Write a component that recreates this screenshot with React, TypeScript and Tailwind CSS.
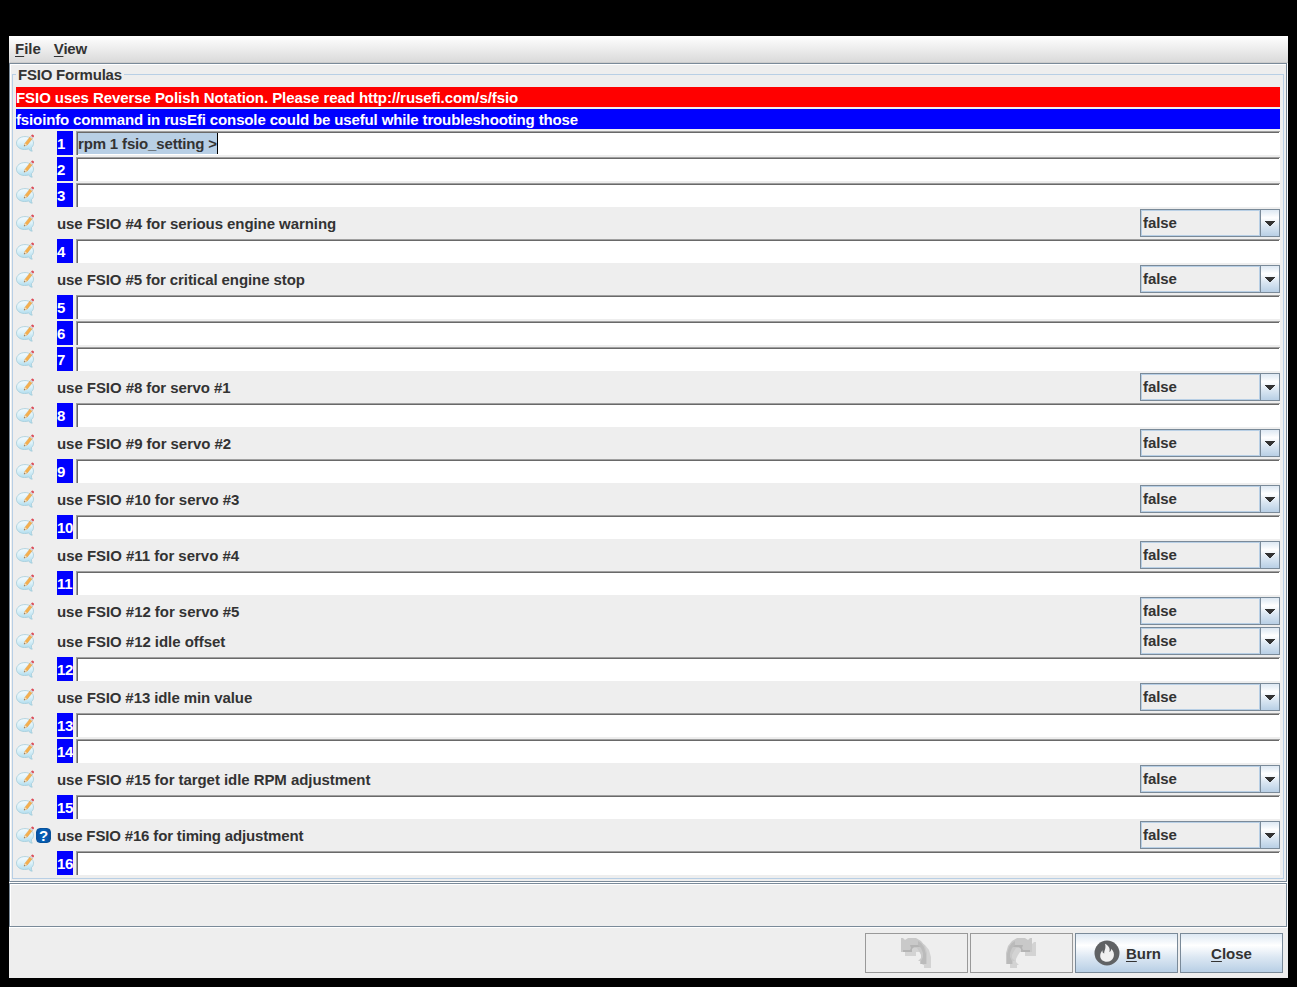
import React from "react";

type Row = { kind: "field"; n: number; value?: string } | { kind: "combo"; label: string; track: string; help?: boolean };

const f = (n: number, value?: string): Row => ({ kind: "field", n, value });
const c = (label: string, track: string, help?: boolean): Row => ({ kind: "combo", label, track, help });

const rows: Row[] = [
  f(1, "rpm 1 fsio_setting >"),
  f(2),
  f(3),
  c("use FSIO #4 for serious engine warning", "tracking-[-0.07px]"),
  f(4),
  c("use FSIO #5 for critical engine stop", "tracking-[-0.085px]"),
  f(5),
  f(6),
  f(7),
  c("use FSIO #8 for servo #1", "tracking-[-0.06px]"),
  f(8),
  c("use FSIO #9 for servo #2", "tracking-[-0.04px]"),
  f(9),
  c("use FSIO #10 for servo #3", "tracking-[-0.04px]"),
  f(10),
  c("use FSIO #11 for servo #4", "tracking-[-0.02px]"),
  f(11),
  c("use FSIO #12 for servo #5", "tracking-[-0.04px]"),
  c("use FSIO #12 idle offset", "tracking-[-0.04px]"),
  f(12),
  c("use FSIO #13 idle min value", "tracking-[-0.09px]"),
  f(13),
  f(14),
  c("use FSIO #15 for target idle RPM adjustment", "tracking-[-0.06px]"),
  f(15),
  c("use FSIO #16 for timing adjustment", "tracking-[-0.16px]", true),
  f(16),
];

const metal = "bg-[linear-gradient(180deg,#dde8f3_0%,#ffffff_30%,#dde8f3_60%,#b8cfe5_100%)]";

function NoteIcon() {
  return (
    <svg width="19" height="18" viewBox="0 0 19 18" className="shrink-0">
      <defs>
        <linearGradient id="bubble" x1="0" y1="0" x2="0" y2="1">
          <stop offset="0" stopColor="#f3fafd" />
          <stop offset="0.4" stopColor="#e0f3fa" />
          <stop offset="1" stopColor="#a9d9ec" />
        </linearGradient>
      </defs>
      <path d="M9 2.600C4 2.600 .5 5.400 .5 9.200C.5 12.800 4 15.500 8.500 15.500C10 15.500 11.500 15.300 12.600 14.900C13.200 15.900 14.400 17.200 16.200 17.200C15.600 16.200 15.300 14.900 15.400 13.600C16.800 12.400 17.500 10.900 17.500 9.200C17.500 5.400 14 2.600 9 2.600Z" fill="url(#bubble)" stroke="#a3cbd9" strokeWidth=".8" />
      <path d="M8 12.200L9 9.200L14.300 2.400L16.700 4.200L11.300 10.900Z" fill="#f5b04e" stroke="#d6954a" strokeWidth=".4" />
      <path d="M8 12.200L9 9.300L11 10.900Z" fill="#f3dfc2" />
      <path d="M8 12.300L8.500 10.900L9.400 11.500Z" fill="#444" />
      <path d="M13.900 3.200L15 1.800L17.100 3.500L16.100 4.900Z" fill="#d2d6de" />
      <path d="M15 1.800L15.900 .7C16.500 .1 18.500 1.600 18 2.400L17.100 3.500Z" fill="#dc4c58" />
    </svg>
  );
}

function HelpIcon() {
  return (
    <span className="flex h-[15px] w-[15px] items-center justify-center rounded-[4px] border border-[#07529c] bg-[linear-gradient(90deg,#0b4fa3,#0467bd_50%,#0b4a98)] text-[15px] leading-none text-white">
      ?
    </span>
  );
}

function Combo() {
  return (
    <div className="flex h-7 w-[140px] border border-[#7a8a99]">
      <div className="flex w-[119px] items-center border border-[#b8cfe5] pl-[1px] text-[15px] tracking-[-0.1px]">
        <span className="-mt-[1px]">false</span>
      </div>
      <div className={`flex flex-1 justify-center border-l border-[#7a8a99] pt-[11px] ${metal}`}>
        <svg width="10" height="5" viewBox="0 0 10 5" shapeRendering="crispEdges">
          <path d="M0 0H10V1H9V2H8V3H7V4H6V5H4V4H3V3H2V2H1V1H0Z" fill="#333" />
        </svg>
      </div>
    </div>
  );
}

function FormRow({ row }: { row: Row }) {
  const isField = row.kind === "field";
  return (
    <div className={isField ? "flex h-6" : "flex h-7"}>
      <div className="flex w-[41px] shrink-0 items-center">
        <NoteIcon />
        {!isField && row.help && <span className="pl-[1px]"><HelpIcon /></span>}
      </div>
      {row.kind === "field" ? (
        <>
          <div className="flex w-4 shrink-0 items-center overflow-hidden bg-[#0000ff] text-[15px] tracking-[-0.3px] text-white">{row.n}</div>
          <div className="ml-[3px] flex flex-1 border-l border-t border-[#a0a0a0] bg-white pr-[1px]">
            <div className="flex flex-1 border-l border-t border-[#696969] bg-white">
              {row.value && (
                <div className="flex h-[21px] items-center border-r border-black bg-[#b8cfe5] tracking-[-0.16px] whitespace-pre">{row.value}</div>
              )}
            </div>
          </div>
        </>
      ) : (
        <>
          <div className={`flex flex-1 items-center ${row.track}`}>{row.label}</div>
          <Combo />
        </>
      )}
    </div>
  );
}

function Etched({ className, children }: { className: string; children?: React.ReactNode }) {
  return (
    <div className="border-b border-r border-white">
      <div className="border border-[#7a8a99]">
        <div className={`border-l border-t border-white ${className}`}>{children}</div>
      </div>
    </div>
  );
}

const arrowBody = "M0 0H2L4 2L7 0H15L20 3L24 8L26 15V26H19V23H17L20 20V17L18 13L16 10H11V14H0Z";

function ArrowIcon({ flip }: { flip?: boolean }) {
  const turn = flip ? "translate(26 0) scale(-1 1)" : undefined;
  return (
    <svg width="31" height="31" viewBox="0 0 31 31">
      <g transform="translate(4 4)">
        <path d={arrowBody} transform={turn} fill="#d3d3d3" />
      </g>
      <g transform={turn}>
        <path d={arrowBody} fill="#c9c9c9" />
        <path d="M9 7H19V9H13L11 11V14H2V12H9L10 10Z" fill="#b4b4b4" />
        <path d="M17 3L20 5L23 9L25 16V26H20V23L22 19V15L20 10L17 7Z" fill="#bbbbbb" />
      </g>
    </svg>
  );
}

function FlameIcon() {
  return (
    <svg width="26" height="26" viewBox="0 0 26 26">
      <circle cx="13" cy="13" r="12.500" fill="#606264" />
      <path d="M11 3.800C15 6 16.500 9 15.300 12C16.800 11.500 17.300 10.300 17 8.800C19.600 11 20.600 14 19.600 17C18.600 20 16 21.800 13 21.800C9 21.800 6.200 19.300 6.200 16C6.200 13.500 7.200 11.800 8.500 10.300C8.300 12 8.800 13.200 10.300 13.500C9.800 11 12.500 8.500 11 3.800Z" fill="#f0f0f0" />
    </svg>
  );
}

export default function App() {
  return (
    <div className="h-[987px] w-[1297px] bg-black pl-[9px] pt-9 font-['Liberation_Sans',Arial,sans-serif] text-[15px] font-bold leading-none text-[#333]">
      <div className="flex h-[942px] w-[1279px] flex-col bg-[#eee]">
        <div className="flex h-[27px] shrink-0 gap-[13px] border-b border-[#ccc] bg-[linear-gradient(180deg,#ffffff,#dadada)] pl-[6px] pt-[5px]">
          <span><u className="underline-offset-2 decoration-1">F</u>ile</span>
          <span className="tracking-[-0.2px]"><u className="underline-offset-2 decoration-1">V</u>iew</span>
        </div>
        <Etched className="h-[817px] pl-[1px] pr-[2px] pt-[3px]">
          <fieldset className="relative mt-[6px] h-[805px] border border-[#b8cfe5] px-[3px] pt-3">
            <span className="absolute -top-[9px] left-[3px] bg-[#eee] px-[2px] py-[1px] tracking-[-0.22px]">FSIO Formulas</span>
            <div className="flex h-5 items-center bg-[#ff0000] tracking-[-0.065px] text-white">FSIO uses Reverse Polish Notation. Please read http://rusefi.com/s/fsio</div>
            <div className="mt-[2px] flex h-5 items-center bg-[#0000ff] tracking-[-0.135px] text-white">fsioinfo command in rusEfi console could be useful while troubleshooting those</div>
            <div className="mt-[2px] flex flex-col gap-[2px]">
              {rows.map((row, i) => <FormRow key={i} row={row} />)}
            </div>
          </fieldset>
        </Etched>
        <Etched className="h-[42px]" />
        <div className="flex justify-end gap-[2px] pr-[5px] pt-[5px]">
          <div className="flex h-10 w-[103px] items-center justify-center border border-[#999]"><ArrowIcon /></div>
          <div className="flex h-10 w-[103px] items-center justify-center border border-[#999]"><ArrowIcon flip /></div>
          <div className={`flex h-10 w-[103px] items-center justify-center gap-[6px] border border-[#7a8a99] pl-[2px] ${metal}`}>
            <FlameIcon />
            <span><u className="underline-offset-2 decoration-1">B</u>urn</span>
          </div>
          <div className={`flex h-10 w-[103px] items-center justify-center border border-[#7a8a99] ${metal}`}>
            <span><u className="underline-offset-2 decoration-1">C</u>lose</span>
          </div>
        </div>
      </div>
    </div>
  );
}
